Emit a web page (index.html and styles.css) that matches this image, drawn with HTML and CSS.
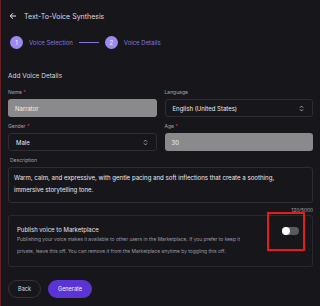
FILE: index.html
```
<!DOCTYPE html>
<html lang="en">
<head>
  <meta charset="UTF-8">
  <meta name="viewport" content="width=device-width, initial-scale=1.0">
  <title>Text-To-Voice Synthesis</title>
  <link rel="stylesheet" href="styles.css">
</head>
<body>
  <div class="page">
    <div class="header">
      <svg class="back" width="8" height="8" viewBox="0 0 8 8"><path d="M7 4H1.2M4 1.2L1.2 4 4 6.8" fill="none" stroke="#e4e4ea" stroke-width="1"/></svg>
      <span class="title">Text-To-Voice Synthesis</span>
    </div>

    <div class="steps">
      <span class="num">1</span>
      <span class="step-label">Voice Selection</span>
      <span class="line"></span>
      <span class="num">2</span>
      <span class="step-label">Voice Details</span>
    </div>

    <h2>Add Voice Details</h2>

    <div class="grid">
      <div class="field">
        <label>Name <span class="req">*</span></label>
        <div class="input filled">Narrator</div>
      </div>
      <div class="field">
        <label>Language</label>
        <div class="input select">English (United States)
          <svg width="5" height="7" viewBox="0 0 5 7"><path d="M1 2.6L2.5 1.1 4 2.6M1 4.4L2.5 5.9 4 4.4" fill="none" stroke="#cfcfd6" stroke-width="0.8"/></svg>
        </div>
      </div>
      <div class="field">
        <label>Gender <span class="req">*</span></label>
        <div class="input select">Male
          <svg width="5" height="7" viewBox="0 0 5 7"><path d="M1 2.6L2.5 1.1 4 2.6M1 4.4L2.5 5.9 4 4.4" fill="none" stroke="#cfcfd6" stroke-width="0.8"/></svg>
        </div>
      </div>
      <div class="field">
        <label>Age <span class="req">*</span></label>
        <div class="input filled">30</div>
      </div>
    </div>

    <div class="field desc-field">
      <label>Description</label>
      <div class="textarea">Warm, calm, and expressive, with gentle pacing and soft inflections that create a soothing, immersive storytelling tone.</div>
      <div class="count">120/5000</div>
    </div>

    <div class="publish">
      <div class="publish-text">
        <div class="publish-title">Publish voice to Marketplace</div>
        <p>Publishing your voice makes it available to other users in the Marketplace. If you prefer to keep it private, leave this off. You can remove it from the Marketplace anytime by toggling this off.</p>
      </div>
      <div class="switch"><span class="knob"></span></div>
      <div class="highlight"></div>
    </div>

    <div class="actions">
      <button class="btn-back">Back</button>
      <button class="btn-generate">Generate</button>
    </div>
  </div>
</body>
</html>
```

FILE: styles.css
```
body {
  margin: 0;
  font-family: Inter, "Noto Sans", sans-serif;
  background: #17161b;
  color: #e4e4ea;
}

.page {
  height: 306px;
  box-sizing: border-box;
  border-left: 1px solid #6a1f24;
  padding: 0 7px;
  overflow: hidden;
}

.header {
  display: flex;
  align-items: center;
  gap: 7px;
  height: 30px;
  padding-left: 1px;
  padding-top: 1px;
}

.title {
  font-size: 7px;
  color: #dcdce2;
}

.steps {
  display: flex;
  align-items: center;
  height: 23px;
  padding-left: 2px;
}

.num {
  width: 13px;
  height: 13px;
  border-radius: 50%;
  background: #9c8af0;
  color: #f2efff;
  font-size: 6px;
  display: flex;
  align-items: center;
  justify-content: center;
}

.step-label {
  font-size: 6px;
  color: #8677d6;
  margin-left: 6px;
}

.line {
  width: 20px;
  height: 1px;
  background: #8677d6;
  margin: 0 6px;
}

h2 {
  font-size: 6.5px;
  font-weight: 400;
  color: #d6d6dc;
  margin: 18px 0 9px;
}

.grid {
  display: grid;
  grid-template-columns: 1fr 1fr;
  column-gap: 8px;
  row-gap: 6px;
}

.field label {
  display: block;
  font-size: 5px;
  color: #a4a4ac;
  margin-bottom: 4px;
  height: 6px;
}

.req {
  color: #e0353d;
}

.input {
  height: 18px;
  border-radius: 3px;
  box-sizing: border-box;
  display: flex;
  align-items: center;
  justify-content: space-between;
  padding: 0 8px 0 7px;
  font-size: 6px;
}

.input.filled {
  background: #8a8a8c;
  color: #f0f0f2;
}

.input.select {
  border: 1px solid #2e2d34;
  color: #ececf0;
}

.desc-field {
  margin-top: 6px;
}

.desc-field label {
  padding-left: 2px;
}

.textarea {
  border: 1px solid #2e2d34;
  border-radius: 3px;
  height: 36px;
  box-sizing: border-box;
  padding: 4px 20px 4px 5px;
  font-size: 6.1px;
  line-height: 12px;
  color: #ececf0;
}

.count {
  text-align: right;
  font-size: 4.8px;
  color: #a4a4ac;
  margin-top: 4px;
}

.publish {
  position: relative;
  margin-top: 2px;
  border: 1px solid #2a2930;
  border-radius: 3px;
  height: 52px;
  box-sizing: border-box;
  display: flex;
  align-items: flex-start;
  padding: 10px 8px 0;
}

.publish-text {
  flex: 1;
}

.publish-title {
  font-size: 6px;
  color: #e4e4ea;
}

.publish p {
  font-size: 4.9px;
  line-height: 12px;
  color: #9c9ca4;
  margin: 0;
  max-width: 234px;
}

.switch {
  width: 17px;
  height: 8px;
  border-radius: 4px;
  background: #5a5a60;
  margin: 1px 5px 0 24px;
  position: relative;
}

.knob {
  position: absolute;
  left: 0;
  top: 0;
  width: 8px;
  height: 8px;
  border-radius: 50%;
  background: #fff;
}

.highlight {
  position: absolute;
  left: 258px;
  top: -4px;
  width: 34px;
  height: 35px;
  border: 2px solid #e41c1c;
}

.actions {
  display: flex;
  gap: 7px;
  margin-top: 13px;
}

.actions button {
  height: 18px;
  border-radius: 9px;
  font-family: inherit;
  font-size: 5.5px;
  cursor: pointer;
}

.btn-back {
  width: 33px;
  background: transparent;
  border: 1px solid #34333a;
  color: #dcdce2;
}

.btn-generate {
  width: 44px;
  background: #5b34d6;
  border: none;
  color: #f4f0ff;
}
```
